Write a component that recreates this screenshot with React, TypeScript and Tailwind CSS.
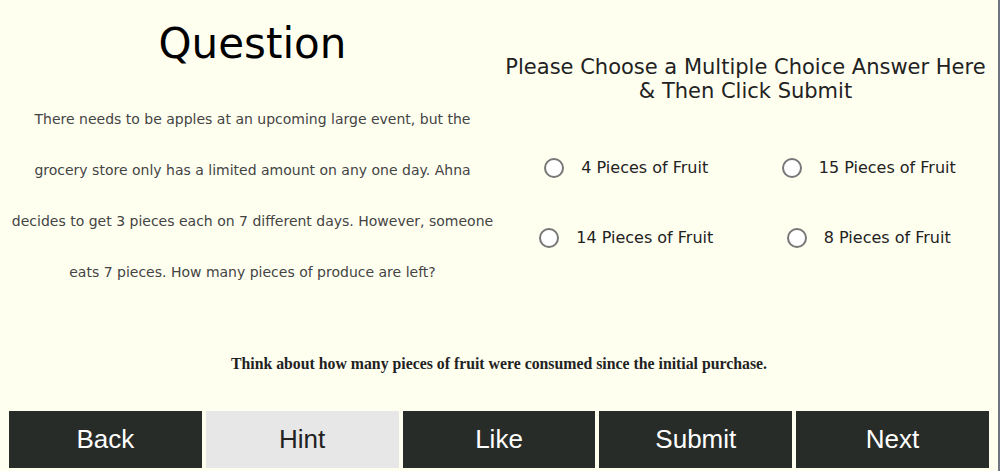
import { useState } from "react";

const choices = [
  { id: "a", label: "4 Pieces of Fruit" },
  { id: "b", label: "15 Pieces of Fruit" },
  { id: "c", label: "14 Pieces of Fruit" },
  { id: "d", label: "8 Pieces of Fruit" },
];

const buttons = ["Back", "Hint", "Like", "Submit", "Next"];

export default function App() {
  const [picked, setPicked] = useState<string | null>(null);

  return (
    <main className="w-full h-[471px] bg-[#fffff0] border-r-2 border-[#6e7580] flex flex-col overflow-hidden font-['DejaVu_Sans',sans-serif]">
      <div className="flex h-[331px]">
        {/* question side */}
        <section className="w-[505px] flex flex-col items-center">
          <h1 className="pt-[19px] text-[42px] leading-[50px] text-black">Question</h1>

          <p className="mt-[25px] text-[14px] leading-[51px] text-[#444] text-center">
            There needs to be apples at an upcoming large event, but the
            <br />
            grocery store only has a limited amount on any one day. Ahna
            <br />
            decides to get 3 pieces each on 7 different days. However, someone
            <br />
            eats 7 pieces. How many pieces of produce are left?
          </p>
        </section>

        {/* answers side */}
        <section className="flex-1 flex flex-col items-center pr-[8px]">
          <h2 className="mt-[55px] mr-[4px] text-[21px] leading-[24px] text-[#222] text-center">
            Please Choose a Multiple Choice Answer Here
            <br />
            &amp; Then Click Submit
          </h2>

          <div className="mt-[54px] w-full grid grid-cols-2 gap-y-[48px]">
            {choices.map((c) => (
              <label
                key={c.id}
                className="flex items-center justify-center gap-[17px] h-[22px] cursor-pointer"
              >
                <input
                  type="radio"
                  name="answer"
                  checked={picked === c.id}
                  onChange={() => setPicked(c.id)}
                  className="appearance-none w-[20px] h-[20px] rounded-full border-2 border-[#777] bg-white checked:border-[6px] checked:border-[#2563eb]"
                />
                <span className="text-[16px] text-[#222]">{c.label}</span>
              </label>
            ))}
          </div>
        </section>
      </div>

      <p className="text-center text-[15.8px] font-bold text-[#222] font-['Liberation_Serif',serif] leading-[20px] mt-[23px]">
        Think about how many pieces of fruit were consumed since the initial purchase.
      </p>

      <div className="mt-[37px] flex gap-[4px] px-[9px]">
        {buttons.map((b) => (
          <button
            key={b}
            className={`flex-1 h-[57px] text-[26px] font-['Liberation_Sans',sans-serif] ${
              b === "Hint" ? "bg-[#e8e7e7] text-[#222]" : "bg-[#282c29] text-white"
            }`}
          >
            {b}
          </button>
        ))}
      </div>
    </main>
  );
}
